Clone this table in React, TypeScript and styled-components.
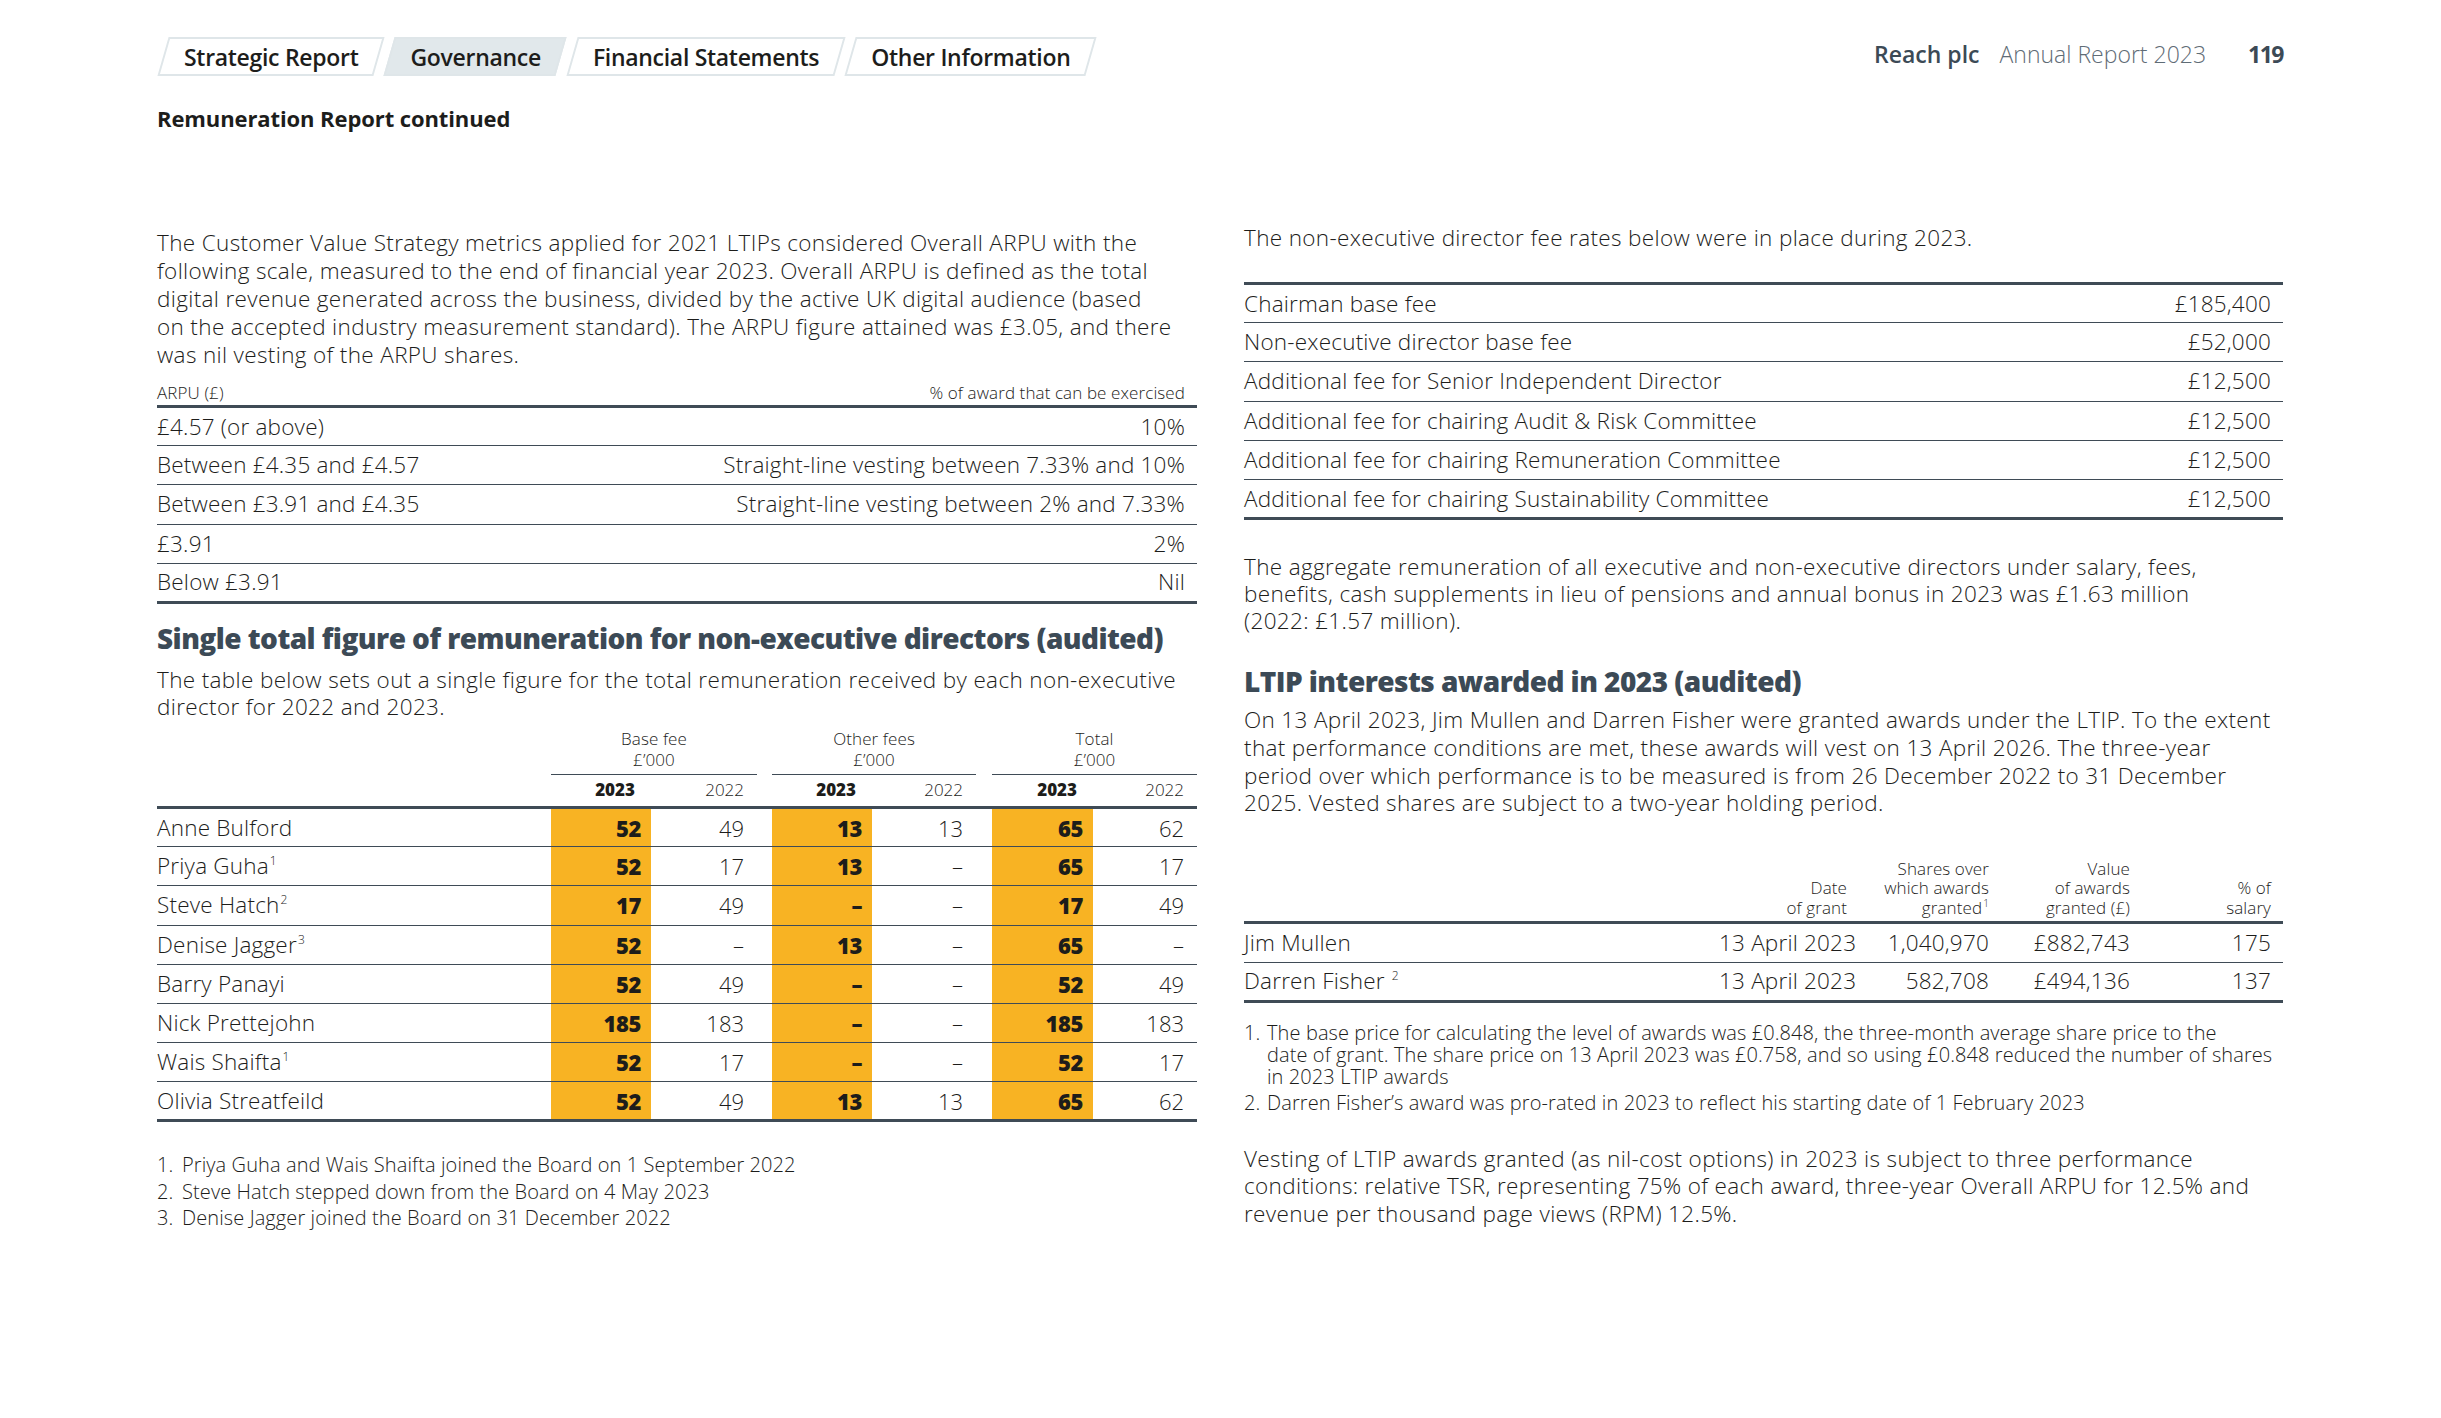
import React from 'react';
import styled, { createGlobalStyle } from 'styled-components';

const INK = '#1d1d1b';
const SLATE = '#3c4a56';
const RULE = '#3f4b56';
const YELLOW = '#f8b323';
const FONT = '"Open Sans", "Noto Sans", Arial, sans-serif';

const GlobalStyle = createGlobalStyle`
  html, body { margin: 0; padding: 0; background: #ffffff; }
  body { font-family: ${FONT}; color: ${INK}; }
  * { box-sizing: border-box; }
`;

const Page = styled.div`
  width: 2441px;
  min-height: 1418px;
  padding: 37px 158px 0 157px;
  background: #fff;
`;

const TopBar = styled.header`
  display: flex;
  align-items: center;
  justify-content: space-between;
  height: 39px;
`;

const Tabs = styled.nav`
  display: flex;
  gap: 10px;
  height: 39px;
  padding-left: 6px;
`;

const Tab = styled.div<{ $active?: boolean }>`
  position: relative;
  z-index: 0;
  display: flex;
  align-items: center;
  height: 39px;
  padding: 0 21px;
  font-size: 23px;
  font-weight: 600;
  letter-spacing: -0.3px;
  color: ${INK};
  &::before {
    content: '';
    position: absolute;
    inset: 0;
    z-index: -1;
    transform: skewX(-16deg);
    border: 2px solid #dfe6e9;
    background: ${(p) => (p.$active ? '#e1e8eb' : '#ffffff')};
  }
`;

const Brand = styled.div`
  display: flex;
  align-items: baseline;
  font-size: 23px;
  margin-top: -6px;
`;

const BrandName = styled.span`
  font-weight: 600;
  color: ${SLATE};
`;

const BrandDoc = styled.span`
  font-weight: 300;
  color: #5f6c76;
  margin-left: 20px;
`;

const PageNum = styled.span`
  font-weight: 700;
  color: ${SLATE};
  margin-left: 42px;
  letter-spacing: -1.5px;
`;

const Kicker = styled.h1`
  margin: 28px 0 0;
  font-size: 22px;
  line-height: 28px;
  font-weight: 700;
  letter-spacing: -0.1px;
  color: ${INK};
`;

const Columns = styled.div`
  display: grid;
  grid-template-columns: 1040px 1039px;
  column-gap: 47px;
  margin-top: 92px;
  align-items: start;
`;

const Column = styled.section<{ $offset?: number }>`
  display: flex;
  flex-direction: column;
  padding-top: ${(p) => p.$offset ?? 0}px;
`;

const Body = styled.p<{ $lh?: number; $mt?: number }>`
  margin: ${(p) => p.$mt ?? 0}px 0 0;
  font-size: 22.5px;
  line-height: ${(p) => p.$lh ?? 28}px;
  font-weight: 300;
  letter-spacing: 0.35px;
  white-space: nowrap;
  color: ${INK};
`;

const Heading = styled.h2<{ $mt: number }>`
  margin: ${(p) => p.$mt}px 0 0;
  font-size: 28px;
  line-height: 32px;
  font-weight: 800;
  letter-spacing: -0.55px;
  color: ${SLATE};
  white-space: nowrap;
`;

const Table = styled.table<{ $mt?: number; $topRule?: boolean }>`
  width: 100%;
  border-collapse: collapse;
  margin-top: ${(p) => p.$mt ?? 0}px;
  table-layout: fixed;
  border-top: ${(p) => (p.$topRule ? `3px solid ${RULE}` : 'none')};
`;

const SmallHead = styled.th<{ $align?: 'left' | 'right' | 'center'; $pr?: number; $lh?: number; $pb?: number }>`
  font-size: 17px;
  line-height: ${(p) => p.$lh ?? 20}px;
  font-weight: 300;
  letter-spacing: 0.1px;
  color: ${INK};
  text-align: ${(p) => p.$align ?? 'left'};
  vertical-align: bottom;
  padding: 0 ${(p) => p.$pr ?? 0}px ${(p) => p.$pb ?? 2}px 0;
  white-space: nowrap;
`;

const HeadRow = styled.tr<{ $thick?: boolean }>`
  border-bottom: ${(p) => (p.$thick ? `3px solid ${RULE}` : 'none')};
`;

const Row = styled.tr<{ $last?: boolean }>`
  height: 39.2px;
  border-bottom: ${(p) => (p.$last ? `3px` : `1.5px`)} solid ${RULE};
`;

const Cell = styled.td<{ $align?: 'left' | 'right'; $pr?: number }>`
  padding: 0 ${(p) => p.$pr ?? 0}px 0 0;
  font-size: 22.5px;
  line-height: 26px;
  font-weight: 300;
  letter-spacing: 0.2px;
  text-align: ${(p) => p.$align ?? 'left'};
  color: ${INK};
  white-space: nowrap;
`;

const NumCell = styled.td<{ $hl?: boolean }>`
  padding: 0 ${(p) => (p.$hl ? 10 : 13)}px 0 0;
  font-size: 22px;
  line-height: 26px;
  text-align: right;
  font-weight: ${(p) => (p.$hl ? 800 : 300)};
  letter-spacing: ${(p) => (p.$hl ? '-0.4px' : '0')};
  background: ${(p) => (p.$hl ? YELLOW : 'transparent')};
  color: ${INK};
`;

const GapCell = styled.td``;

const GroupHead = styled.th<{ $line?: boolean }>`
  font-size: 17px;
  line-height: 21px;
  font-weight: 300;
  letter-spacing: 0.1px;
  text-align: center;
  vertical-align: bottom;
  padding: 0 0 4px;
  color: ${INK};
  border-bottom: ${(p) => (p.$line ? `1.5px solid ${RULE}` : 'none')};
`;

const YearHead = styled.th<{ $bold?: boolean; $hl?: boolean }>`
  height: 33px;
  font-size: 17px;
  line-height: 20px;
  font-weight: ${(p) => (p.$bold ? 800 : 300)};
  letter-spacing: 0;
  text-align: right;
  vertical-align: middle;
  padding: 0 ${(p) => (p.$hl ? 16 : 13)}px 0 0;
  color: ${INK};
`;

const Sup = styled.sup<{ $small?: boolean }>`
  font-size: ${(p) => (p.$small ? 10 : 12)}px;
  line-height: 0;
  vertical-align: ${(p) => (p.$small ? 7 : 9)}px;
  margin-left: 1px;
`;

const Notes = styled.div<{ $mt: number; $lh: number; $gap: number }>`
  display: flex;
  flex-direction: column;
  gap: ${(p) => p.$gap}px;
  margin-top: ${(p) => p.$mt}px;
  font-size: 20px;
  line-height: ${(p) => p.$lh}px;
  font-weight: 300;
  letter-spacing: 0.1px;
  color: ${INK};
`;

const Note = styled.div<{ $indent: number }>`
  display: grid;
  grid-template-columns: ${(p) => p.$indent}px 1fr;
  white-space: nowrap;
`;

const arpuRows: [string, string][] = [
  ['£4.57 (or above)', '10%'],
  ['Between £4.35 and £4.57', 'Straight-line vesting between 7.33% and 10%'],
  ['Between £3.91 and £4.35', 'Straight-line vesting between 2% and 7.33%'],
  ['£3.91', '2%'],
  ['Below £3.91', 'Nil'],
];

type Ned = { name: string; sup?: string; v: [string, string, string, string, string, string] };
const neds: Ned[] = [
  { name: 'Anne Bulford', v: ['52', '49', '13', '13', '65', '62'] },
  { name: 'Priya Guha', sup: '1', v: ['52', '17', '13', '–', '65', '17'] },
  { name: 'Steve Hatch', sup: '2', v: ['17', '49', '–', '–', '17', '49'] },
  { name: 'Denise Jagger', sup: '3', v: ['52', '–', '13', '–', '65', '–'] },
  { name: 'Barry Panayi', v: ['52', '49', '–', '–', '52', '49'] },
  { name: 'Nick Prettejohn', v: ['185', '183', '–', '–', '185', '183'] },
  { name: 'Wais Shaifta', sup: '1', v: ['52', '17', '–', '–', '52', '17'] },
  { name: 'Olivia Streatfeild', v: ['52', '49', '13', '13', '65', '62'] },
];

const fees: [string, string][] = [
  ['Chairman base fee', '£185,400'],
  ['Non-executive director base fee', '£52,000'],
  ['Additional fee for Senior Independent Director', '£12,500'],
  ['Additional fee for chairing Audit & Risk Committee', '£12,500'],
  ['Additional fee for chairing Remuneration Committee', '£12,500'],
  ['Additional fee for chairing Sustainability Committee', '£12,500'],
];

const ltip = [
  { name: 'Jim Mullen', sup: '', date: '13 April 2023', shares: '1,040,970', value: '£882,743', pct: '175' },
  { name: 'Darren Fisher ', sup: '2', date: '13 April 2023', shares: '582,708', value: '£494,136', pct: '137' },
];

export default function App() {
  return (
    <Page>
      <GlobalStyle />
      <TopBar>
        <Tabs>
          <Tab>Strategic Report</Tab>
          <Tab $active>Governance</Tab>
          <Tab>Financial Statements</Tab>
          <Tab>Other Information</Tab>
        </Tabs>
        <Brand>
          <BrandName>Reach plc</BrandName>
          <BrandDoc>Annual Report 2023</BrandDoc>
          <PageNum>119</PageNum>
        </Brand>
      </TopBar>
      <Kicker>Remuneration Report continued</Kicker>

      <Columns>
        <Column $offset={5}>
          <Body>
            The Customer Value Strategy metrics applied for 2021 LTIPs considered Overall ARPU with the
            <br />
            following scale, measured to the end of financial year 2023. Overall ARPU is defined as the total
            <br />
            digital revenue generated across the business, divided by the active UK digital audience (based
            <br />
            on the accepted industry measurement standard). The ARPU figure attained was £3.05, and there
            <br />
            was nil vesting of the ARPU shares.
          </Body>

          <Table $mt={14}>
            <colgroup>
              <col style={{ width: 400 }} />
              <col />
            </colgroup>
            <thead>
              <HeadRow $thick>
                <SmallHead $align="left">ARPU (£)</SmallHead>
                <SmallHead $align="right" $pr={12}>
                  % of award that can be exercised
                </SmallHead>
              </HeadRow>
            </thead>
            <tbody>
              {arpuRows.map(([a, b], i) => (
                <Row key={a} $last={i === arpuRows.length - 1}>
                  <Cell>{a}</Cell>
                  <Cell $align="right" $pr={12}>
                    {b}
                  </Cell>
                </Row>
              ))}
            </tbody>
          </Table>

          <Heading $mt={18}>Single total figure of remuneration for non-executive directors (audited)</Heading>
          <Body $lh={27} $mt={12}>
            The table below sets out a single figure for the total remuneration received by each non-executive
            <br />
            director for 2022 and 2023.
          </Body>

          <Table $mt={8}>
            <colgroup>
              <col style={{ width: 394 }} />
              <col style={{ width: 100 }} />
              <col style={{ width: 106 }} />
              <col style={{ width: 15 }} />
              <col style={{ width: 100 }} />
              <col style={{ width: 104 }} />
              <col style={{ width: 16 }} />
              <col style={{ width: 101 }} />
              <col style={{ width: 104 }} />
            </colgroup>
            <thead>
              <tr>
                <GroupHead />
                <GroupHead colSpan={2} $line>
                  Base fee
                  <br />
                  £’000
                </GroupHead>
                <GroupHead />
                <GroupHead colSpan={2} $line>
                  Other fees
                  <br />
                  £’000
                </GroupHead>
                <GroupHead />
                <GroupHead colSpan={2} $line>
                  Total
                  <br />
                  £’000
                </GroupHead>
              </tr>
              <HeadRow $thick>
                <YearHead />
                <YearHead $bold $hl>2023</YearHead>
                <YearHead>2022</YearHead>
                <YearHead />
                <YearHead $bold $hl>2023</YearHead>
                <YearHead>2022</YearHead>
                <YearHead />
                <YearHead $bold $hl>2023</YearHead>
                <YearHead>2022</YearHead>
              </HeadRow>
            </thead>
            <tbody>
              {neds.map((n, i) => (
                <Row key={n.name} $last={i === neds.length - 1}>
                  <Cell>
                    {n.name}
                    {n.sup && <Sup>{n.sup}</Sup>}
                  </Cell>
                  <NumCell $hl>{n.v[0]}</NumCell>
                  <NumCell>{n.v[1]}</NumCell>
                  <GapCell />
                  <NumCell $hl>{n.v[2]}</NumCell>
                  <NumCell>{n.v[3]}</NumCell>
                  <GapCell />
                  <NumCell $hl>{n.v[4]}</NumCell>
                  <NumCell>{n.v[5]}</NumCell>
                </Row>
              ))}
            </tbody>
          </Table>

          <Notes $mt={30} $lh={26.5} $gap={0}>
            <Note $indent={25}>
              <span>1.</span>
              <span>Priya Guha and Wais Shaifta joined the Board on 1 September 2022</span>
            </Note>
            <Note $indent={25}>
              <span>2.</span>
              <span>Steve Hatch stepped down from the Board on 4 May 2023</span>
            </Note>
            <Note $indent={25}>
              <span>3.</span>
              <span>Denise Jagger joined the Board on 31 December 2022</span>
            </Note>
          </Notes>
        </Column>

        <Column>
          <Body>The non-executive director fee rates below were in place during 2023.</Body>
          <Table $mt={30} $topRule>
            <tbody>
              {fees.map(([a, b], i) => (
                <Row key={a} $last={i === fees.length - 1}>
                  <Cell>{a}</Cell>
                  <Cell $align="right" $pr={12}>
                    {b}
                  </Cell>
                </Row>
              ))}
            </tbody>
          </Table>

          <Body $lh={27} $mt={33}>
            The aggregate remuneration of all executive and non-executive directors under salary, fees,
            <br />
            benefits, cash supplements in lieu of pensions and annual bonus in 2023 was £1.63 million
            <br />
            (2022: £1.57 million).
          </Body>

          <Heading $mt={31}>LTIP interests awarded in 2023 (audited)</Heading>
          <Body $lh={27.7} $mt={9}>
            On 13 April 2023, Jim Mullen and Darren Fisher were granted awards under the LTIP. To the extent
            <br />
            that performance conditions are met, these awards will vest on 13 April 2026. The three-year
            <br />
            period over which performance is to be measured is from 26 December 2022 to 31 December
            <br />
            2025. Vested shares are subject to a two-year holding period.
          </Body>

          <Table $mt={42}>
            <colgroup>
              <col />
              <col style={{ width: 140 }} />
              <col style={{ width: 142 }} />
              <col style={{ width: 141 }} />
              <col style={{ width: 141 }} />
            </colgroup>
            <thead>
              <HeadRow $thick>
                <SmallHead />
                <SmallHead $align="right" $pr={12} $lh={19.5} $pb={4}>
                  Date
                  <br />
                  of grant
                </SmallHead>
                <SmallHead $align="right" $pr={12} $lh={19.5} $pb={4}>
                  Shares over
                  <br />
                  which awards
                  <br />
                  granted<Sup $small>1</Sup>
                </SmallHead>
                <SmallHead $align="right" $pr={12} $lh={19.5} $pb={4}>
                  Value
                  <br />
                  of awards
                  <br />
                  granted (£)
                </SmallHead>
                <SmallHead $align="right" $pr={12} $lh={19.5} $pb={4}>
                  % of
                  <br />
                  salary
                </SmallHead>
              </HeadRow>
            </thead>
            <tbody>
              {ltip.map((r, i) => (
                <Row key={r.name} $last={i === ltip.length - 1}>
                  <Cell>
                    {r.name}
                    {r.sup && <Sup>{r.sup}</Sup>}
                  </Cell>
                  <Cell $align="right" $pr={12}>{r.date}</Cell>
                  <Cell $align="right" $pr={12}>{r.shares}</Cell>
                  <Cell $align="right" $pr={12}>{r.value}</Cell>
                  <Cell $align="right" $pr={12}>{r.pct}</Cell>
                </Row>
              ))}
            </tbody>
          </Table>

          <Notes $mt={19} $lh={22} $gap={4}>
            <Note $indent={23}>
              <span>1.</span>
              <span>
                The base price for calculating the level of awards was £0.848, the three-month average share price to the
                <br />
                date of grant. The share price on 13 April 2023 was £0.758, and so using £0.848 reduced the number of shares
                <br />
                in 2023 LTIP awards
              </span>
            </Note>
            <Note $indent={23}>
              <span>2.</span>
              <span>Darren Fisher’s award was pro-rated in 2023 to reflect his starting date of 1 February 2023</span>
            </Note>
          </Notes>

          <Body $lh={27.5} $mt={31}>
            Vesting of LTIP awards granted (as nil-cost options) in 2023 is subject to three performance
            <br />
            conditions: relative TSR, representing 75% of each award, three-year Overall ARPU for 12.5% and
            <br />
            revenue per thousand page views (RPM) 12.5%.
          </Body>
        </Column>
      </Columns>
    </Page>
  );
}
